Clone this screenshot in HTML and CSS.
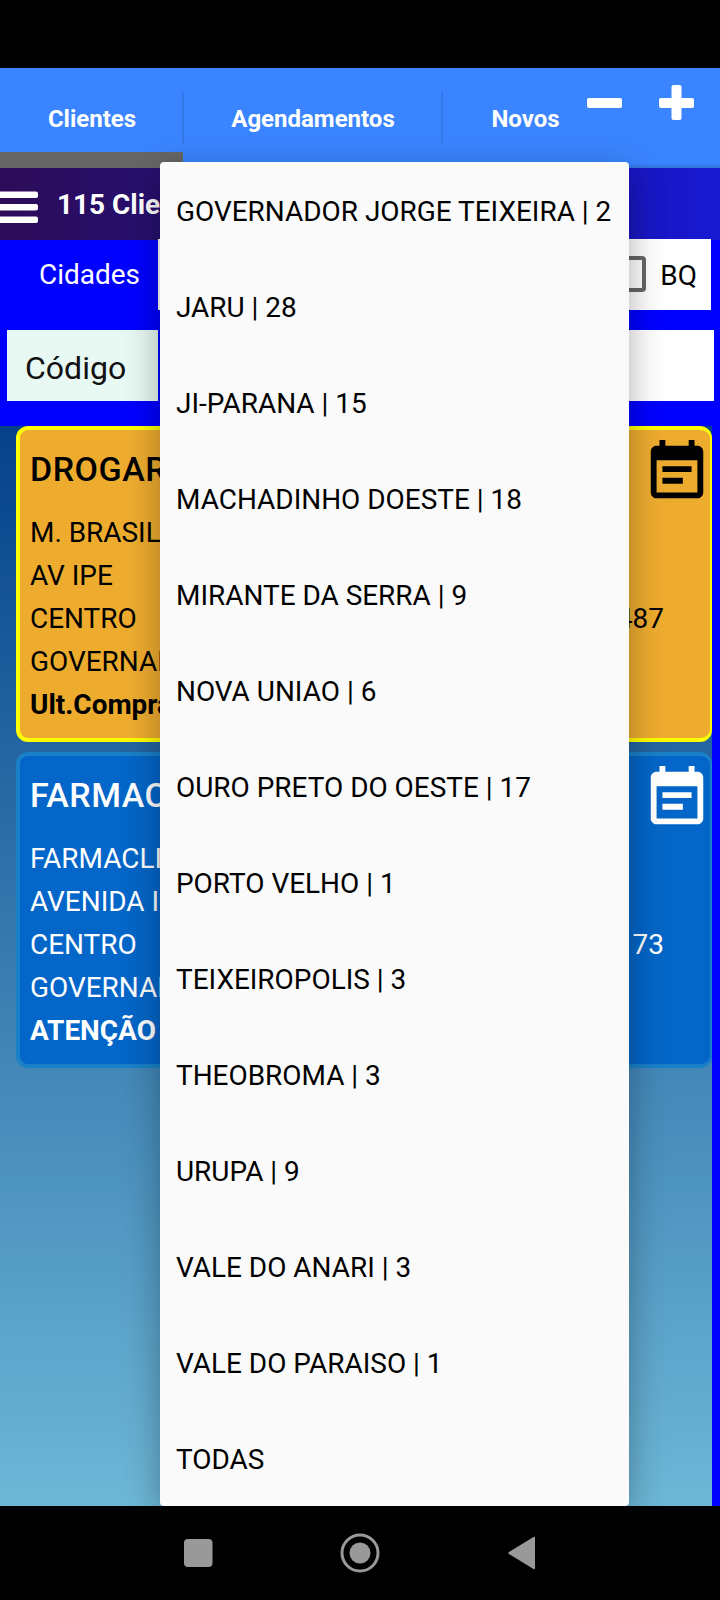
FILE: index.html
```html
<!DOCTYPE html>
<html lang="pt-BR">
<head>
<meta charset="utf-8">
<title>Clientes</title>
<link rel="stylesheet" href="styles.css">
</head>
<body>
<div class="screen">
  <div class="status"></div>
  <header class="tabs">
    <div class="tab active"><span>Clientes</span></div>
    <div class="tab wide"><span>Agendamentos</span></div>
    <div class="tab last"><span>Novos</span></div>
    <svg class="tools" width="110" height="40" viewBox="0 0 110 40" fill="#fff"><rect x="0" y="15" width="35" height="10" rx="2"/><rect x="72" y="15" width="35" height="10" rx="2"/><rect x="84.5" y="2" width="10" height="35" rx="2"/></svg>
  </header>
  <div class="titlebar">
    <svg width="38" height="34" viewBox="0 0 38 34" fill="#fff"><rect x="-3" y="0.5" width="41" height="6.5" rx="2"/><rect x="-3" y="13" width="41" height="6.5" rx="2"/><rect x="-3" y="25.5" width="41" height="6.5" rx="2"/></svg>
    <b>115 Clie</b>
  </div>
  <section class="filters">
    <div class="row">
      <span class="label">Cidades</span>
      <div class="choice"><i class="box"></i><span>BQ</span></div>
    </div>
    <div class="row search">
      <div class="code">Código</div>
      <div class="field"></div>
    </div>
  </section>
  <main class="list">
    <article class="card gold">
      <h2>DROGAR</h2>
      <svg class="note" viewBox="0 0 24 24" fill="currentColor"><path d="M17 10H7v2h10v-2zm2-7h-1V1h-2v2H8V1H6v2H5c-1.11 0-1.99.9-1.99 2L3 19c0 1.1.89 2 2 2h14c1.1 0 2-.9 2-2V5c0-1.1-.9-2-2-2zm0 16H5V8h14v11zm-5-5H7v2h7v-2z"/></svg>
      <p>M. BRASIL</p>
      <p>AV IPE</p>
      <p class="split"><span>CENTRO</span><span>487</span></p>
      <p>GOVERNAD</p>
      <p><b>Ult.Compra</b></p>
    </article>
    <article class="card blue">
      <h2>FARMAC</h2>
      <svg class="note" viewBox="0 0 24 24" fill="currentColor"><path d="M17 10H7v2h10v-2zm2-7h-1V1h-2v2H8V1H6v2H5c-1.11 0-1.99.9-1.99 2L3 19c0 1.1.89 2 2 2h14c1.1 0 2-.9 2-2V5c0-1.1-.9-2-2-2zm0 16H5V8h14v11zm-5-5H7v2h7v-2z"/></svg>
      <p>FARMACLI</p>
      <p>AVENIDA I</p>
      <p class="split"><span>CENTRO</span><span>73</span></p>
      <p>GOVERNAD</p>
      <p><b>ATENÇÃO</b></p>
    </article>
  </main>
  <ul class="menu">
    <li>GOVERNADOR JORGE TEIXEIRA | 2</li>
    <li>JARU | 28</li>
    <li>JI-PARANA | 15</li>
    <li>MACHADINHO DOESTE | 18</li>
    <li>MIRANTE DA SERRA | 9</li>
    <li>NOVA UNIAO | 6</li>
    <li>OURO PRETO DO OESTE | 17</li>
    <li>PORTO VELHO | 1</li>
    <li>TEIXEIROPOLIS | 3</li>
    <li>THEOBROMA | 3</li>
    <li>URUPA | 9</li>
    <li>VALE DO ANARI | 3</li>
    <li>VALE DO PARAISO | 1</li>
    <li>TODAS</li>
  </ul>
  <nav class="navbar">
    <svg width="720" height="94" viewBox="0 0 720 94" fill="#999"><rect x="184" y="33" width="28.5" height="28" rx="4"/><circle cx="360" cy="47" r="10.5"/><circle cx="360" cy="47" r="18" fill="none" stroke="#999" stroke-width="3"/><path d="M509 46 533.5 31q1.5-.8 1.5 1V62q0 1.800-1.500 1L509 48q-1.500-1 0-2z"/></svg>
  </nav>
</div>
</body>
</html>
```
FILE: styles.css
```css
* { box-sizing: border-box; }
body { margin: 0; font-family: Roboto, sans-serif; font-size: 27.95px; color: #000; }
.screen { position: relative; width: 720px; height: 1600px; overflow: hidden; display: flex; flex-direction: column; background: #00f; }
.status { height: 68px; background: #000; }
.tabs { position: relative; height: 100px; display: flex; background: #3a85ff; color: #fff; font-weight: 700; font-size: 24px; box-shadow: inset 0 -4px 3px -2px #3272d8; }
.tab { position: relative; width: 183px; padding: 37px 0 0 1px; text-align: center; line-height: 28px; }
.tab.wide { width: 261px; margin-left: -1px; border-left: 2px solid #3378e8; border-right: 2px solid #3378e8; height: 52px; margin-top: 24px; padding-top: 13px; }
.tab.last { width: 165px; padding-left: 0; }
.tab.active { border-bottom: 16px solid #666; }
.tools { position: absolute; left: 587px; top: 15px; }
.titlebar { height: 72px; display: flex; align-items: center; gap: 19px; background: linear-gradient(90deg, #2d0b58, #26106f 22%, #1718d2); color: #fff; }
.titlebar svg { margin-top: 7px; }
.titlebar b { line-height: 32px; margin-top: 2px; }
.filters { height: 186px; }
.row { display: flex; height: 71px; margin-top: -1px; }
.label { width: 158px; padding: 20px 0 0 39px; color: #fff; line-height: 32px; }
.choice { width: 553px; background: #fff; display: flex; align-items: center; justify-content: flex-end; gap: 14px; padding: 0 14px 0 0; }
.choice span { padding-top: 2px; }
.box { width: 36px; height: 36px; margin-bottom: 1px; border: 4px solid #666; border-radius: 4px; }
.search { margin: 20px 6px 0 7px; }
.code { width: 151px; background: #e8f8f3; font-size: 32px; padding-left: 18px; line-height: 77px; color: #111; }
.field { flex: 1; margin-left: 3px; background: #fff; }
.list { width: 712px; height: 1080px; padding-left: 16px; display: flex; flex-direction: column; gap: 10.500px; overflow: hidden; background: linear-gradient(#04418a, #6db7d7); }
.card { position: relative; height: 315.500px; border: 4px solid; border-right-width: 2px; border-radius: 12px; padding: 20px 46px 0 10px; }
.card.gold { border-color: #ff0; background: #eeac2f; }
.card.blue { border-color: #1a80c8; background: #0466c8; color: #fff; }
.card h2 { margin: 0 0 23px; font-size: 34px; font-weight: 500; line-height: 38px; letter-spacing: .5px; }
.card p { margin: 0; line-height: 43px; white-space: nowrap; }
.split { display: flex; justify-content: space-between; }
.note { position: absolute; right: -2px; top: 7px; width: 70px; height: 70px; }
.menu { position: absolute; left: 160px; top: 162px; width: 469px; height: 1344px; margin: 0; padding: 0; list-style: none; background: #fafafa; border-radius: 4px; box-shadow: 0 10px 36px rgba(0, 0, 0, .32); }
.menu li { height: 96px; line-height: 100px; padding-left: 16px; white-space: nowrap; }
.navbar { position: relative; height: 94px; background: #000; }
```
